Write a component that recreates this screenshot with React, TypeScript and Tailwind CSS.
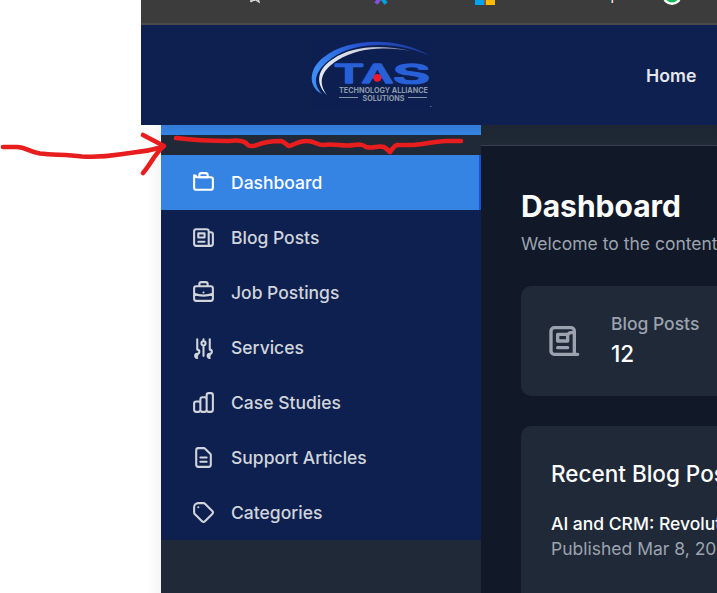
import React from "react";

const navItems: { label: string; paths: string[] }[] = [
  {
    label: "Dashboard",
    paths: [
      "M3 7v10a2 2 0 002 2h14a2 2 0 002-2V9a2 2 0 00-2-2H5a2 2 0 00-2-2v2",
      "M8 5a2 2 0 012-2h4a2 2 0 012 2v2H8V5z",
    ],
  },
  {
    label: "Blog Posts",
    paths: [
      "M19 20H5a2 2 0 01-2-2V6a2 2 0 012-2h10a2 2 0 012 2v1m2 13a2 2 0 01-2-2V7m2 13a2 2 0 002-2V9a2 2 0 00-2-2h-2m-4-3H9M7 16h6M7 8h6v4H7V8z",
    ],
  },
  {
    label: "Job Postings",
    paths: [
      "M21 13.255A23.931 23.931 0 0112 15c-3.183 0-6.22-.62-9-1.745M16 6V4a2 2 0 00-2-2h-4a2 2 0 00-2 2v2m4 6h.01M5 20h14a2 2 0 002-2V8a2 2 0 00-2-2H5a2 2 0 00-2 2v10a2 2 0 002 2z",
    ],
  },
  {
    label: "Services",
    paths: [
      "M12 6V4m0 2a2 2 0 100 4m0-4a2 2 0 110 4m-6 8a2 2 0 100-4m0 4a2 2 0 100 4m0-4v2m0-6V4m6 6v10m6-2a2 2 0 100-4m0 4a2 2 0 100 4m0-4v2m0-6V4",
    ],
  },
  {
    label: "Case Studies",
    paths: [
      "M9 19v-6a2 2 0 00-2-2H5a2 2 0 00-2 2v6a2 2 0 002 2h2a2 2 0 002-2zm0 0V9a2 2 0 012-2h2a2 2 0 012 2v10m-6 0a2 2 0 002 2h2a2 2 0 002-2m0 0V5a2 2 0 012-2h2a2 2 0 012 2v14a2 2 0 01-2 2h-2a2 2 0 01-2-2z",
    ],
  },
  {
    label: "Support Articles",
    paths: [
      "M9 12h6m-6 4h6m2 5H7a2 2 0 01-2-2V5a2 2 0 012-2h5.586a1 1 0 01.707.293l5.414 5.414a1 1 0 01.293.707V19a2 2 0 01-2 2z",
    ],
  },
  {
    label: "Categories",
    paths: [
      "M7 7h.01M7 3h5c.512 0 1.024.195 1.414.586l7 7a2 2 0 010 2.828l-7 7a2 2 0 01-2.828 0l-7-7A1.994 1.994 0 013 12V7a4 4 0 014-4z",
    ],
  },
];

function Icon({ paths, className }: { paths: string[]; className: string }) {
  return (
    <svg
      viewBox="0 0 24 24"
      fill="none"
      stroke="currentColor"
      strokeWidth="2"
      strokeLinecap="round"
      strokeLinejoin="round"
      className={className}
    >
      {paths.map((d) => (
        <path key={d} d={d} />
      ))}
    </svg>
  );
}

function BrowserBar() {
  return (
    <div className="h-[25px] shrink-0 border-b-2 border-[#4a4a4a] bg-[#3c3c3c]">
      <svg width="576" height="23" viewBox="0 0 576 23" className="block">
        <path d="M109.6 2 L110.6 -2 M109.6 2 L113.8 -0.6 L118 2 L117 -2" fill="none" stroke="#d6d6d6" strokeWidth="1.4" />
        <path d="M239 -2 L235 3.6" stroke="#8250df" strokeWidth="4" />
        <path d="M241 -2 L245 3.6" stroke="#00a4dc" strokeWidth="4" />
        <rect x="334" y="0" width="9" height="5" fill="#00a4ef" />
        <rect x="343" y="0" width="2" height="5" fill="#85573a" />
        <rect x="345" y="0" width="9" height="5" fill="#ffb900" />
        <rect x="470" y="0" width="1" height="3" fill="#4aa3c7" />
        <rect x="471" y="0" width="1" height="3" fill="#ddd" />
        <rect x="472" y="0" width="1" height="3" fill="#a3402c" />
        <circle cx="531" cy="-4.5" r="9.5" fill="#fff" />
        <circle cx="531" cy="-4.5" r="7" fill="#0fb858" />
      </svg>
    </div>
  );
}

function Logo() {
  return (
    <svg width="140" height="80" viewBox="0 0 140 80" className="block">
      <defs>
        <linearGradient id="swooshBlue" x1="0" x2="1" y1="0.4" y2="0">
          <stop offset="0" stopColor="#3b8cf5" />
          <stop offset="0.5" stopColor="#2550d0" />
          <stop offset="1" stopColor="#1b3992" />
        </linearGradient>
        <linearGradient id="swooshWhite" x1="0" x2="1" y1="0" y2="0">
          <stop offset="0" stopColor="#e4e8ee" />
          <stop offset="0.5" stopColor="#d2d6df" />
          <stop offset="1" stopColor="#4a5b8a" />
        </linearGradient>
      </defs>
      <rect x="11" y="5" width="120" height="70" fill="#0d1f50" />
      <path d="M22 59 C8 52 8 34 24 22 C48 3 98 1 130 21 C98 6 55 6 32 23 C14 36 12 48 22 59Z" fill="url(#swooshBlue)" />
      <path d="M27 60 C14 48 18 33 33 24 C52 11 80 9 112 16 C82 11 57 13 38 25 C20 36 18 48 27 60Z" fill="url(#swooshWhite)" />
      <text y="48.2" fontFamily="Inter, sans-serif" fontSize="25.5" fontWeight="500" fill="#2860d8" stroke="#2860d8" strokeWidth="1.7" strokeLinejoin="round">
        <tspan x="34" textLength="30" lengthAdjust="spacingAndGlyphs">T</tspan>
        <tspan x="62" textLength="31" lengthAdjust="spacingAndGlyphs">A</tspan>
        <tspan x="93" textLength="37" lengthAdjust="spacingAndGlyphs">S</tspan>
      </text>
      <path d="M77.5 35.5 L84.5 49.5 H70.5Z" fill="#0d1f50" />
      <circle cx="77.3" cy="42.8" r="3.9" fill="#f3152a" />
      <text x="39" y="58" textLength="89" lengthAdjust="spacingAndGlyphs" fontFamily="Inter, sans-serif" fontSize="7.4" fontWeight="700" fill="#8c9aa8">
        TECHNOLOGY ALLIANCE
      </text>
      <text x="62.5" y="66.3" textLength="42" lengthAdjust="spacingAndGlyphs" fontFamily="Inter, sans-serif" fontSize="7.4" fontWeight="700" fill="#8c9aa8">
        SOLUTIONS
      </text>
      <path d="M39 62.5H58M108 62.5H127" stroke="#8494a5" />
      <circle cx="130.8" cy="71.5" r="0.6" fill="#8494a5" />
    </svg>
  );
}

function Sidebar() {
  return (
    <aside className="flex w-80 shrink-0 flex-col bg-[#1f2937]">
      <div className="h-2.5 bg-linear-to-b from-[#337bd5] to-[#3584e4]" />
      <nav className="mt-5 flex flex-col bg-[#0d2050]">
        {navItems.map((item, i) => (
          <a
            key={item.label}
            className={
              i === 0
                ? "flex h-[55px] items-center gap-[15px] border-r-2 border-[#1d4ed8] bg-[#3584e4] pl-[30px] text-white"
                : "flex h-[55px] items-center gap-[15px] pl-[30px] text-[#d1d5db]"
            }
          >
            <Icon paths={item.paths} className="size-[25px]" />
            <span className="text-[17.5px] leading-[25px] font-medium">{item.label}</span>
          </a>
        ))}
      </nav>
    </aside>
  );
}

function Content() {
  return (
    <main className="min-w-0 flex-1 bg-[#111827] whitespace-nowrap">
      <div className="h-[21px] border-b border-[#374151] bg-linear-to-b from-[#1d2632] to-[#1f2937]" />
      <div className="flex flex-col pt-10 pl-10">
        <h1 className="text-[30px] leading-10 font-bold text-white">Dashboard</h1>
        <p className="mt-[5px] text-[17.5px] leading-[25px] text-[#9ca3af]">Welcome to the content</p>
        <section className="mt-[30px] flex h-[110px] w-[400px] items-center gap-[25px] rounded-[10px] bg-[#1f2937] pl-[25px]">
          <Icon
            paths={["M19 20H5a2 2 0 01-2-2V6a2 2 0 012-2h10a2 2 0 012 2v14", "M7 16h6M13 8H7v4h6V9a2 2 0 012-2h2"]}
            className="size-10 text-[#9ca3af]"
          />
          <div>
            <div className="text-[17.5px] leading-[25px] font-medium text-[#9ca3af]">Blog Posts</div>
            <div className="text-[22.5px] leading-[35px] font-medium text-white">12</div>
          </div>
        </section>
        <section className="mt-[30px] h-[300px] w-[500px] rounded-[10px] bg-[#1f2937] pt-[30px] pl-[30px]">
          <h2 className="text-[22.5px] leading-[35px] font-medium text-white">Recent Blog Posts</h2>
          <div className="mt-5 text-[17.5px] leading-[25px]">
            <p className="font-medium text-white">AI and CRM: Revolutionizing</p>
            <p className="text-[#9ca3af]">Published Mar 8, 2025</p>
          </div>
        </section>
      </div>
    </main>
  );
}

function Annotation() {
  return (
    <svg
      width="717"
      height="593"
      viewBox="0 0 717 593"
      fill="none"
      stroke="#e81d1d"
      strokeWidth="4.6"
      strokeLinecap="round"
      strokeLinejoin="round"
      className="pointer-events-none absolute inset-0"
    >
      <path d="M3 147 H17 C26 147 29 152 40 153.5 C54 155 66 154.5 82 156.5 C104 158 115 155 130 153 C142 152 149 151 163 147" />
      <path d="M143 135 L164 146 C155 153 151 164 143 173" />
      <path d="M176 138 C192 140 210 141 229 141 C237 140 243 141 246 143 C248 146 250 147 257 145 C264 142 269 141 281 141 C285 142 286 145 289 146 C294 145 298 141 306 141 C316 141 316 145 323 145 C335 143 343 147 354 145 C361 144 363 145 366 147 C374 149 377 145 384 147 C387 149 388 150 390 152 C393 149 393 146 397 145 H414 C426 144 438 141 446 141 H461" />
    </svg>
  );
}

export default function App() {
  return (
    <div className="relative flex h-[593px] w-[717px] overflow-hidden bg-white pl-[141px] font-['Inter',sans-serif]">
      <div className="flex min-w-0 flex-1 flex-col">
        <BrowserBar />
        <header className="flex h-[100px] shrink-0 justify-between bg-[#0d2050] pl-[159px]">
          <div className="pt-2.5">
            <Logo />
          </div>
          <div className="flex w-[71px] items-center pt-0.5 text-[17.7px] font-semibold text-[#e5e7eb]">Home</div>
        </header>
        <div className="flex min-h-0 flex-1">
          <div className="w-5 shrink-0 bg-linear-to-r from-white from-30% to-[#f5f5f5]" />
          <Sidebar />
          <Content />
        </div>
      </div>
      <Annotation />
    </div>
  );
}
